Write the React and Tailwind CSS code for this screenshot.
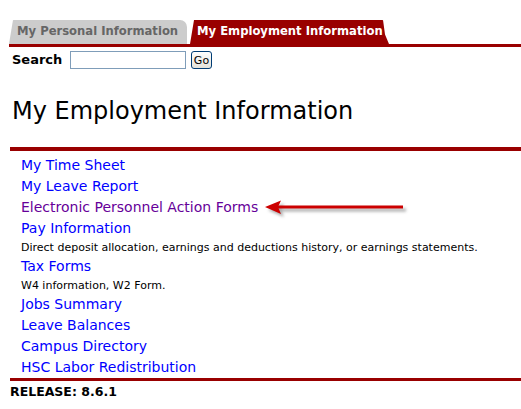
import React from "react";

const font = { fontFamily: '"DejaVu Sans", Verdana, sans-serif' };

function LinkRow({ children, visited }) {
  return (
    <div className="h-[21px] leading-[21px] text-[14px] whitespace-nowrap">
      <a className={visited ? "text-[#660099]" : "text-[#0000ff]"} href="#">
        {children}
      </a>
    </div>
  );
}

function Desc({ children }) {
  return (
    <div className="h-[17px] leading-[17px] text-[11px] text-black whitespace-nowrap">
      {children}
    </div>
  );
}

export default function App() {
  return (
    <div className="relative w-[521px] h-[409px] bg-white overflow-hidden" style={font}>
      {/* Tabs */}
      <div className="pt-[20px] pl-[9px]">
        <div className="flex items-end h-[24px]">
          <div className="h-[24px] w-[178px] bg-[#cccccc] rounded-tr-[7px] rounded-tl-[5px] [clip-path:polygon(4px_0,100%_0,100%_100%,0_100%)] flex items-center pl-[8px] text-[11.6px] font-bold text-[#666666] whitespace-nowrap">
            My Personal Information
          </div>
          <div className="ml-[3px] h-[24px] w-[199px] bg-[#990000] rounded-tr-[7px] [clip-path:polygon(4px_0,97%_0,98%_60%,100%_100%,0_100%)] flex items-center pl-[7px] text-[11.6px] font-bold text-white whitespace-nowrap">
            My Employment Information
          </div>
        </div>
        <div className="h-[3px] bg-[#990000]" />
      </div>

      {/* Search */}
      <div className="flex items-center h-[18px] mt-[4px] pl-[12px]">
        <span className="text-[13px] font-bold text-black w-[58px]">Search</span>
        <div className="w-[116px] h-[18px] border border-[#7f9db9] bg-white" />
        <button className="ml-[5px] h-[18px] w-[21px] border border-[#003c74] rounded-[3px] bg-gradient-to-b from-white to-[#e3e2da] text-[11px] leading-none text-black flex items-center justify-center">
          Go
        </button>
      </div>

      {/* Heading */}
      <div className="pl-[12px] mt-[26px] h-[32px] leading-[32px] text-[24px] text-black whitespace-nowrap">
        My Employment Information
      </div>

      {/* Rule */}
      <div className="ml-[10px] mt-[20px] h-[4px] bg-[#990000]" />

      {/* Links */}
      <div className="pl-[21px] pt-[4px]">
        <LinkRow>My Time Sheet</LinkRow>
        <LinkRow>My Leave Report</LinkRow>
        <LinkRow visited>Electronic Personnel Action Forms</LinkRow>
        <LinkRow>Pay Information</LinkRow>
        <Desc>Direct deposit allocation, earnings and deductions history, or earnings statements.</Desc>
        <LinkRow>Tax Forms</LinkRow>
        <Desc>W4 information, W2 Form.</Desc>
        <LinkRow>Jobs Summary</LinkRow>
        <LinkRow>Leave Balances</LinkRow>
        <LinkRow>Campus Directory</LinkRow>
        <LinkRow>HSC Labor Redistribution</LinkRow>
      </div>

      {/* Bottom rule */}
      <div className="ml-[10px] h-[3px] bg-[#990000]" />
      <div className="pl-[10px] mt-[2px] text-[12.5px] font-bold text-black leading-[18px]">
        RELEASE: 8.6.1
      </div>

      {/* Arrow overlay */}
      <svg className="absolute left-[260px] top-[195px]" width="155" height="26" viewBox="0 0 155 26">
        <defs>
          <filter id="sh" x="-10%" y="-50%" width="130%" height="200%">
            <feGaussianBlur stdDeviation="1.5" />
          </filter>
        </defs>
        <g transform="translate(3,3)" filter="url(#sh)" fill="#888" opacity="0.7">
          <rect x="18" y="10.5" width="125" height="3" />
          <path d="M5 12 L21 5.5 L18 12 L21 19 Z" />
        </g>
        <rect x="18" y="10.5" width="125" height="3" fill="#cc0000" />
        <path d="M5 12 L21 5.5 L18 12 L21 19 Z" fill="#cc0000" />
      </svg>
    </div>
  );
}
